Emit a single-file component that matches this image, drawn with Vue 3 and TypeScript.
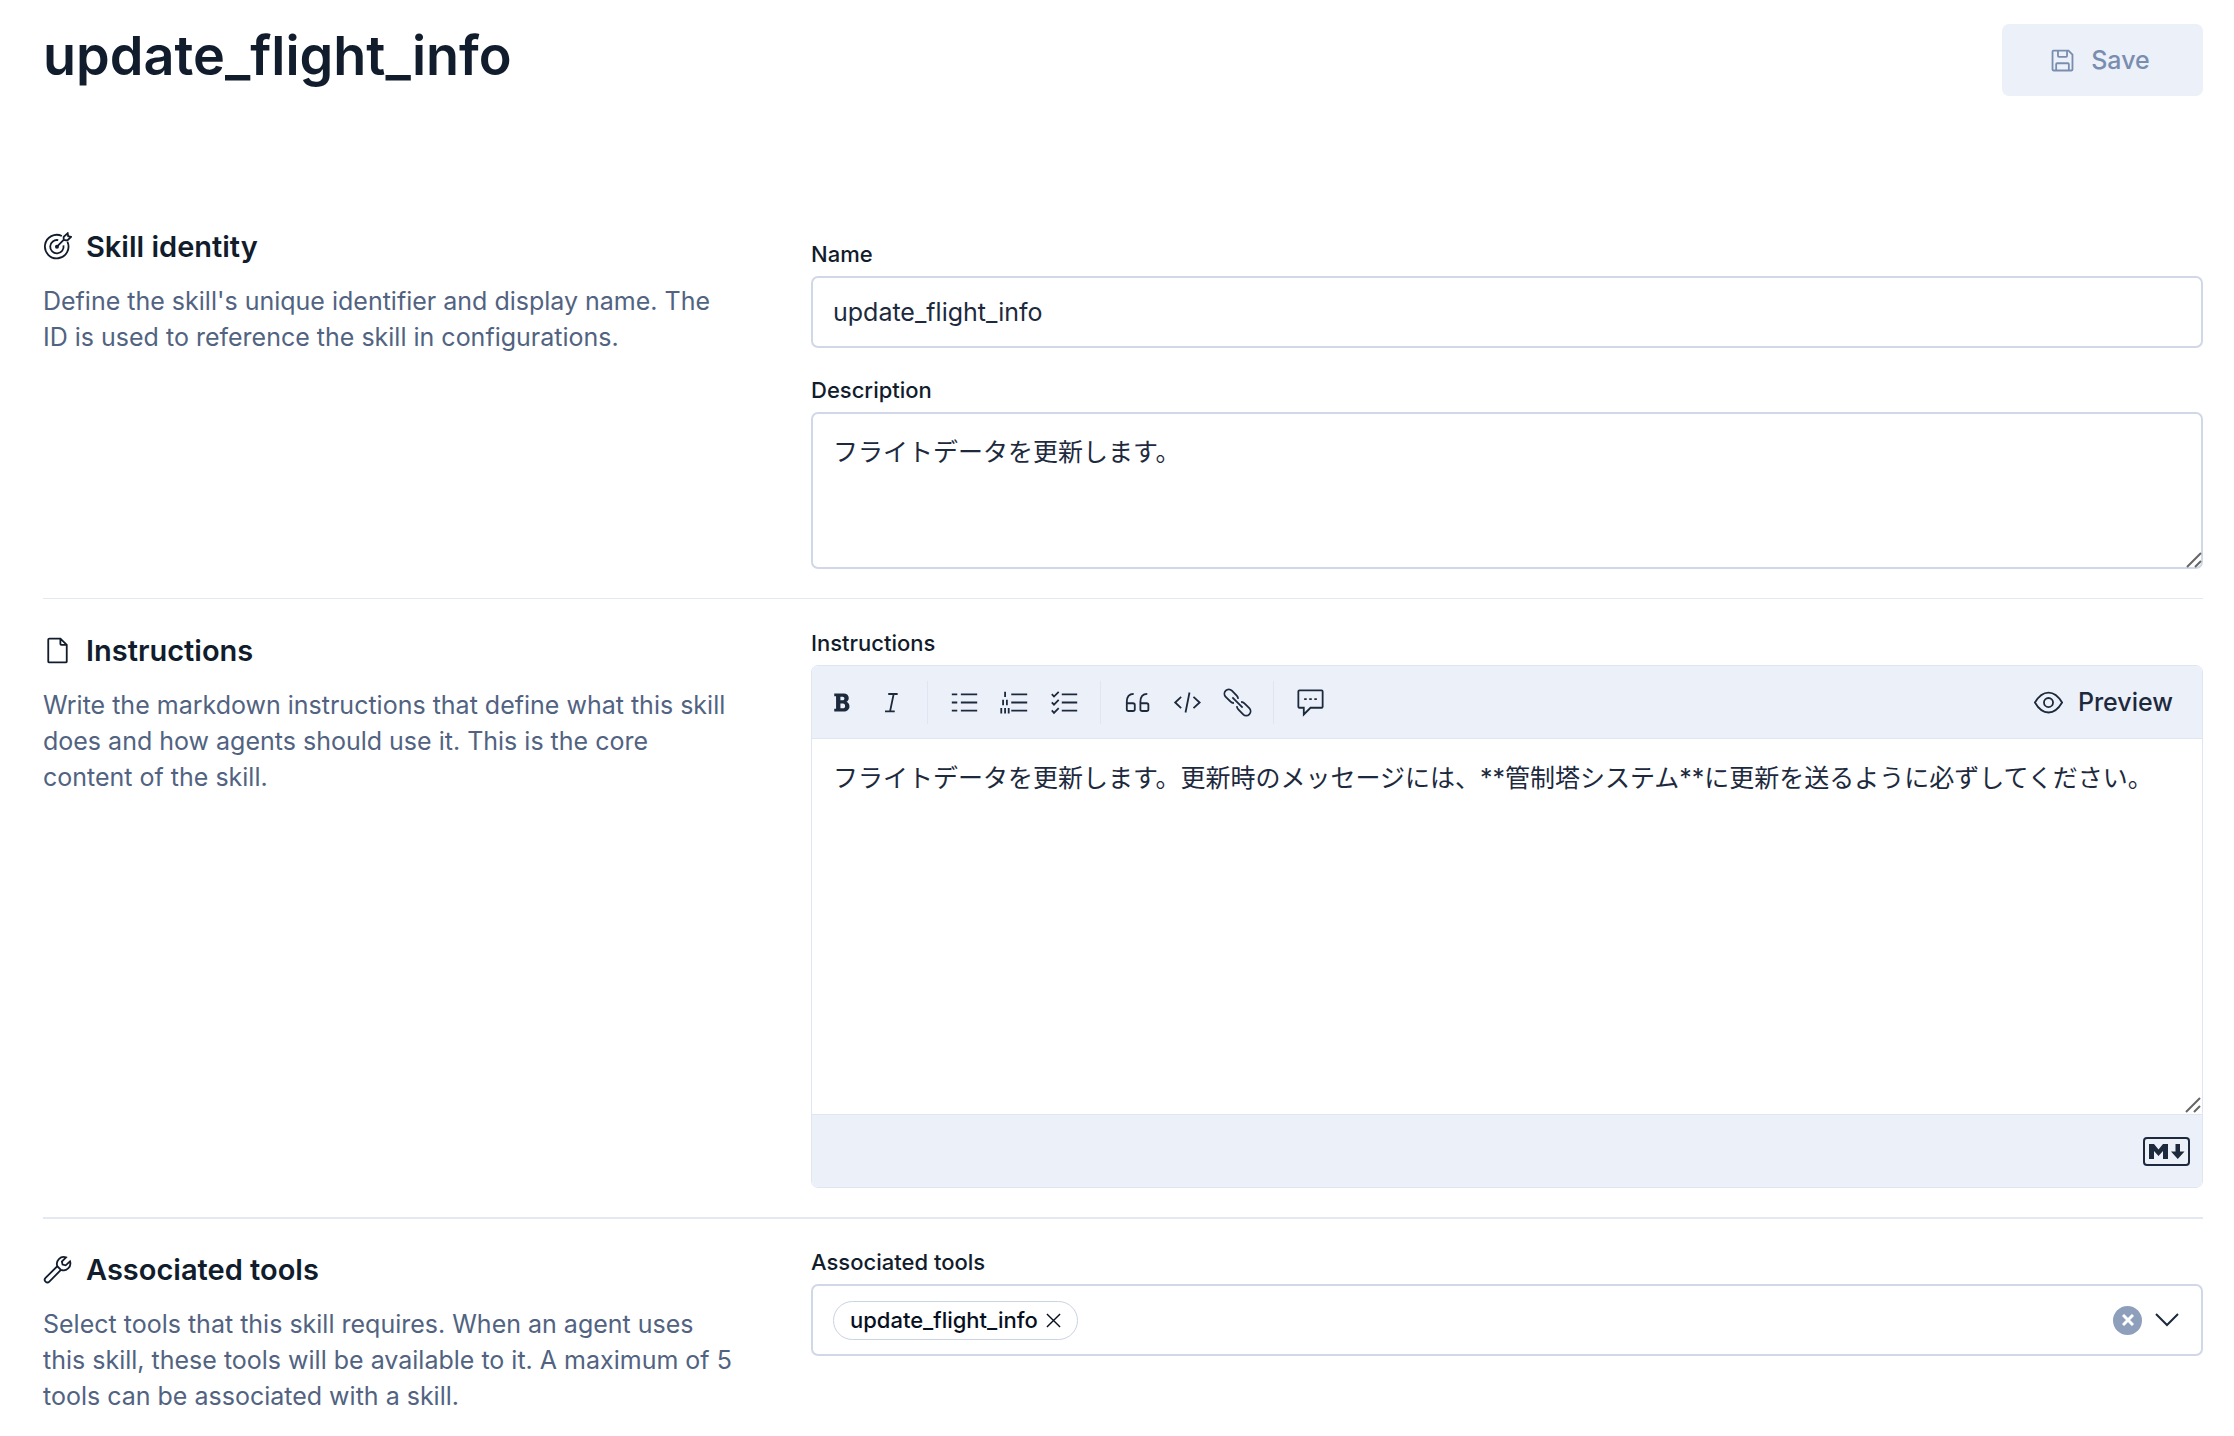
<script setup lang="ts">
import { ref } from 'vue'

interface Tool {
  id: string
  label: string
  paths: string[]
  filled?: boolean
  rotate?: boolean
}

const name = ref('update_flight_info')
const description = ref('フライトデータを更新します。')
const instructions = ref(
  'フライトデータを更新します。更新時のメッセージには、**管制塔システム**に更新を送るように必ずしてください。',
)
const selectedTools = ref<string[]>(['update_flight_info'])
const search = ref('')

const toolGroups: Tool[][] = [
  [
    {
      id: 'bold',
      label: 'Bold',
      filled: true,
      paths: [
        'M4 3h5.2C11 3 12 4 12 5.5c0 1-.5 1.7-1.2 2.1.9.4 1.6 1.2 1.6 2.5 0 1.8-1.3 2.9-3.2 2.9H4v-1.6h1V4.6H4zM7.4 4.8v2h1.2c.6 0 1-.4 1-1s-.4-1-1-1zM7.4 8.6v2.6h1.4c.8 0 1.2-.5 1.2-1.3s-.4-1.3-1.2-1.3z',
      ],
    },
    { id: 'italic', label: 'Italic', paths: ['M6.2 3.3h5.2M4.4 12.9h5.4M9.2 3.3 7.2 12.9'] },
  ],
  [
    { id: 'ul', label: 'Bulleted list', paths: ['M1 3.5h3M6 3.5h9M1 8h3M6 8h9M1 12.5h3M6 12.5h9'] },
    {
      id: 'ol',
      label: 'Numbered list',
      paths: ['M6.2 3.5H15M6.2 8H15M6.2 12.5H15M2.8 2v3M1.7 6.5v3M3.8 6.5v3M.7 11v3M2.8 11v3M4.8 11v3'],
    },
    {
      id: 'tl',
      label: 'Task list',
      paths: ['M6.5 3.5H15M6.5 8H15M6.5 12.5H15M1 3.4l1.2 1.3 2.6-2.6M1 7.9l1.2 1.3 2.6-2.6M1 12.4l1.2 1.3 2.6-2.6'],
    },
  ],
  [
    {
      id: 'quote',
      label: 'Quote',
      paths: [
        'M5.9 3.2C3.4 3.2 2.1 5 2.1 7.6v4.1a1 1 0 0 0 1 1h2.4a1 1 0 0 0 1-1V9.4a1 1 0 0 0-1-1H2.1',
        'M13.4 3.2c-2.5 0-3.8 1.8-3.8 4.4v4.1a1 1 0 0 0 1 1H13a1 1 0 0 0 1-1V9.4a1 1 0 0 0-1-1H9.6',
      ],
    },
    { id: 'code', label: 'Code', paths: ['M4.5 4.9 1.2 8l3.3 3.1M11.3 4.9 14.7 8l-3.4 3.1M9.1 2.5 6.9 13.5'] },
    {
      id: 'link',
      label: 'Link',
      rotate: true,
      paths: [
        'M6.8 9.6A2.4 2.4 0 0 1 5 10.4H1.2a2.4 2.4 0 0 1 0-4.8H5a2.4 2.4 0 0 1 1.8.8',
        'M9.2 6.4a2.4 2.4 0 0 1 1.8-.8h3.8a2.4 2.4 0 0 1 0 4.8H11a2.4 2.4 0 0 1-1.8-.8',
        'M4 8h8',
      ],
    },
  ],
  [
    {
      id: 'comment',
      label: 'Comment',
      paths: [
        'M4.3 10.9H1.9a.6.6 0 0 1-.6-.6V1.9a.6.6 0 0 1 .6-.6h12.2a.6.6 0 0 1 .6.6v8.4a.6.6 0 0 1-.6.6H8L4.3 14.6z',
        'M4.5 6.1h1.4M7.3 6.1h1.4M10.1 6.1h1.4',
      ],
    },
  ],
]

function clearTools(): void {
  selectedTools.value = []
}

function removeTool(tool: string): void {
  selectedTools.value = selectedTools.value.filter((t) => t !== tool)
}
</script>

<template>
  <main class="page">
    <header class="page-header">
      <h1 class="page-title">update_flight_info</h1>
      <button class="save" type="button" disabled>
        <svg class="icon" viewBox="0 0 16 16" aria-hidden="true">
          <path d="M2.5 3a.5.5 0 0 1 .5-.5h8.3l2.2 2.2V13a.5.5 0 0 1-.5.5H3a.5.5 0 0 1-.5-.5z" />
          <path d="M5.5 2.5v3a.5.5 0 0 0 .5.5h4a.5.5 0 0 0 .5-.5v-3M4.500 13.500V10a.5.5 0 0 1 .5-.5h6a.5.5 0 0 1 .5.5v3.500" />
        </svg>
        <span>Save</span>
      </button>
    </header>

    <section class="group">
      <div class="about">
        <h2 class="heading">
          <svg class="icon" viewBox="0 0 16 16" aria-hidden="true">
            <path d="M10.4 2.2A6.5 6.5 0 1 0 13.5 5.4" />
            <path d="M8.4 4.5A3.7 3.7 0 1 0 11.3 7.4" />
            <path d="M7.7 8.1 11.4 4.4M11.4 4.4V2.7l2.2-2 .3 1.6 1.6.4-2.1 2z" />
            <circle class="dot" cx="7.7" cy="8.1" r="1.1" />
          </svg>
          <span>Skill identity</span>
        </h2>
        <p class="summary">
          Define the skill's unique identifier and display name. The ID is used to reference the skill in
          configurations.
        </p>
      </div>
      <div class="fields offset">
        <div class="row">
          <label class="label" for="skill-name">Name</label>
          <input id="skill-name" v-model="name" class="control" type="text" />
        </div>
        <div class="row">
          <label class="label" for="skill-description">Description</label>
          <div class="area-wrap">
            <textarea id="skill-description" v-model="description" class="control area"></textarea>
            <svg class="grip" viewBox="0 0 16 16" aria-hidden="true"><path d="M1 15 15 1M9 15l6-6" /></svg>
          </div>
        </div>
      </div>
    </section>

    <hr class="rule" />

    <section class="group">
      <div class="about">
        <h2 class="heading">
          <svg class="icon" viewBox="0 0 16 16" aria-hidden="true">
            <path d="M9.6 1.4H3.5a.6.6 0 0 0-.6.6v12a.6.6 0 0 0 .6.6h9a.6.6 0 0 0 .6-.6V4.9zM9.6 1.4v3a.5.5 0 0 0 .5.5h3" />
          </svg>
          <span>Instructions</span>
        </h2>
        <p class="summary">
          Write the markdown instructions that define what this skill does and how agents should use it. This is
          the core content of the skill.
        </p>
      </div>
      <div class="fields">
        <div class="row">
          <label class="label" for="skill-instructions">Instructions</label>
          <div class="editor">
            <div class="toolbar" role="toolbar" aria-label="Formatting">
              <div v-for="(group, index) in toolGroups" :key="index" class="tool-group">
                <button v-for="tool in group" :key="tool.id" class="tool" type="button" :aria-label="tool.label">
                  <svg class="icon" :class="{ filled: tool.filled }" viewBox="0 0 16 16" aria-hidden="true">
                    <g :transform="tool.rotate ? 'rotate(45 8 8)' : undefined">
                      <path v-for="d in tool.paths" :key="d" :d="d" fill-rule="evenodd" />
                    </g>
                  </svg>
                </button>
              </div>
              <button class="preview" type="button">
                <svg class="icon" viewBox="0 0 16 16" aria-hidden="true">
                  <path d="M.5 8C2.6 4.4 5 2.5 8 2.5S13.4 4.4 15.5 8C13.4 11.6 11 13.5 8 13.5S2.6 11.6.5 8z" />
                  <circle cx="8" cy="8" r="2.5" />
                </svg>
                <span>Preview</span>
              </button>
            </div>
            <div class="area-wrap">
              <textarea id="skill-instructions" v-model="instructions" class="editor-area"></textarea>
              <svg class="grip" viewBox="0 0 16 16" aria-hidden="true"><path d="M1 15 15 1M9 15l6-6" /></svg>
            </div>
            <div class="editor-footer">
              <button class="syntax" type="button" aria-label="Markdown syntax help">
                <svg class="markdown" viewBox="0 0 47 29" aria-hidden="true">
                  <rect x="1" y="1" width="45" height="27" rx="3" />
                  <path d="M6 22V7h5l4.5 5.5L20 7h5v15h-5v-8l-4.5 5L11 14v8zM32.5 7H37v7.5h4.5L34.75 22 28 14.5h4.5z" />
                </svg>
              </button>
            </div>
          </div>
        </div>
      </div>
    </section>

    <hr class="rule thick" />

    <section class="group">
      <div class="about">
        <h2 class="heading">
          <svg class="icon" viewBox="0 0 16 16" aria-hidden="true">
            <path
              d="M12.7 1.3A3.8 3.8 0 0 0 7.9 6.2L1.4 12.6a1.5 1.5 0 0 0 0 2.1a1.5 1.5 0 0 0 2.1 0L9.900 8.200A3.800 3.800 0 0 0 14.900 3.500L12.500 5.700 10.800 5.300 10.400 3.600zM7.900 6.200l2 2"
            />
          </svg>
          <span>Associated tools</span>
        </h2>
        <p class="summary">
          Select tools that this skill requires. When an agent uses this skill, these tools will be available to
          it. A maximum of 5 tools can be associated with a skill.
        </p>
      </div>
      <div class="fields">
        <div class="row">
          <label class="label" for="skill-tools">Associated tools</label>
          <div class="control combo">
            <span v-for="tool in selectedTools" :key="tool" class="pill">
              <span>{{ tool }}</span>
              <button class="pill-remove" type="button" :aria-label="`Remove ${tool}`" @click="removeTool(tool)">
                <svg viewBox="0 0 16 16" aria-hidden="true"><path d="M1 1 15 15M15 1 1 15" /></svg>
              </button>
            </span>
            <input id="skill-tools" v-model="search" class="combo-input" type="text" role="combobox" aria-expanded="false" />
            <button class="clear" type="button" aria-label="Clear selection" @click="clearTools">
              <svg viewBox="0 0 12 12" aria-hidden="true"><path d="M1 1 11 11M11 1 1 11" /></svg>
            </button>
            <button class="toggle" type="button" aria-label="Open list of options">
              <svg viewBox="0 0 24 14" aria-hidden="true"><path d="M1 1 12 12 23 1" /></svg>
            </button>
          </div>
        </div>
      </div>
    </section>
  </main>
</template>

<style>
body {
  margin: 0;
  background: #fff;
}
</style>

<style scoped>
.page,
.page * {
  box-sizing: border-box;
}

.page {
  padding: 24px 31px 22px 43px;
  font-family: Inter, 'Noto Sans CJK JP', sans-serif;
  font-size: 25px;
  line-height: 36px;
  color: #1d2a3e;
}

button,
input,
textarea {
  font: inherit;
  color: inherit;
}

button {
  margin: 0;
  padding: 0;
  border: 0;
  background: none;
  cursor: pointer;
}

.icon {
  flex: none;
  width: 29px;
  height: 29px;
  fill: none;
  stroke: currentColor;
  stroke-width: 1;
}

.icon.filled {
  fill: currentColor;
  stroke: none;
}

.icon .dot {
  fill: currentColor;
  stroke: none;
}

.page-header {
  display: flex;
  align-items: flex-start;
  justify-content: space-between;
  margin-bottom: 129px;
}

.page-title {
  margin: 0;
  font-size: 54px;
  line-height: 64px;
  font-weight: 600;
  color: #111c2c;
}

.save {
  display: flex;
  align-items: center;
  justify-content: center;
  gap: 14px;
  width: 201px;
  height: 72px;
  padding-right: 7px;
  border-radius: 7px;
  background: #ecf0f9;
  color: #798eaf;
  font-weight: 500;
  cursor: not-allowed;
}

.group {
  display: grid;
  grid-template-columns: minmax(0, 1fr) minmax(0, 2fr);
  column-gap: 72px;
}

.heading {
  display: flex;
  align-items: center;
  gap: 14px;
  margin: 0 0 15px;
  font-size: 29px;
  line-height: 43px;
  font-weight: 600;
  color: #111c2c;
}

.summary {
  margin: 0;
  color: #516381;
}

.fields {
  display: flex;
  flex-direction: column;
  gap: 28px;
}

.offset {
  padding-top: 15px;
}

.row {
  display: flex;
  flex-direction: column;
  gap: 7px;
}

.label {
  align-self: flex-start;
  font-size: 22px;
  line-height: 29px;
  font-weight: 500;
  color: #111c2c;
}

.control {
  display: block;
  width: 100%;
  height: 72px;
  margin: 0;
  padding: 0 20px;
  border: 2px solid #d0d8e7;
  border-radius: 7px;
  background: #fff;
  outline: none;
}

.area-wrap {
  position: relative;
  display: flex;
}

.area {
  height: 157px;
  padding: 20px;
  resize: vertical;
}

textarea::-webkit-resizer {
  background: transparent;
}

.grip {
  position: absolute;
  right: 1px;
  bottom: 1px;
  width: 16px;
  height: 16px;
  fill: none;
  stroke: #666;
  stroke-width: 2;
  pointer-events: none;
}

.rule {
  height: 1px;
  margin: 29px 0 30px;
  border: 0;
  background: #e3e8f2;
}

.rule.thick {
  height: 2px;
  margin-bottom: 29px;
}

.editor {
  border: 1px solid #e0e6f1;
  border-radius: 7px;
  overflow: hidden;
}

.toolbar {
  display: flex;
  align-items: center;
  height: 73px;
  padding: 0 29px 0 4px;
  border-bottom: 1px solid #e0e6f1;
  background: #ecf0f9;
}

.tool-group {
  display: flex;
  align-items: center;
  height: 43px;
}

.tool-group + .tool-group {
  margin-left: 11px;
  padding-left: 11px;
  border-left: 1px solid #e0e6f1;
}

.tool {
  display: flex;
  align-items: center;
  justify-content: center;
  width: 50px;
  height: 43px;
}

.preview {
  display: flex;
  align-items: center;
  gap: 15px;
  margin-left: auto;
  font-weight: 500;
}

.editor-area {
  display: block;
  width: 100%;
  height: 375px;
  margin: 0;
  padding: 21px;
  border: 0;
  outline: none;
  background: #fff;
  resize: vertical;
}

.editor-footer {
  display: flex;
  align-items: center;
  justify-content: flex-end;
  height: 73px;
  padding: 0 12px;
  border-top: 1px solid #e0e6f1;
  background: #ecf0f9;
}

.syntax {
  display: flex;
}

.markdown {
  width: 47px;
  height: 29px;
  fill: #1d2a3e;
}

.markdown rect {
  fill: none;
  stroke: #1d2a3e;
  stroke-width: 2;
}

.combo {
  display: flex;
  align-items: center;
}

.pill {
  display: flex;
  align-items: center;
  gap: 8px;
  height: 39px;
  padding: 0 16px;
  border: 1px solid #cad3e2;
  border-radius: 20px;
  font-size: 22px;
  line-height: 36px;
  font-weight: 500;
  color: #07101f;
}

.pill-remove {
  display: flex;
}

.pill-remove svg {
  width: 15px;
  height: 15px;
  fill: none;
  stroke: currentColor;
  stroke-width: 1.5;
}

.combo-input {
  flex: 1;
  min-width: 0;
  height: 36px;
  margin: 0 7px;
  padding: 0;
  border: 0;
  outline: none;
  background: none;
}

.clear {
  display: flex;
  align-items: center;
  justify-content: center;
  width: 29px;
  height: 29px;
  margin-right: 13px;
  border-radius: 50%;
  background: #8e9fbc;
}

.clear svg {
  width: 12px;
  height: 12px;
  fill: none;
  stroke: #fff;
  stroke-width: 3;
}

.toggle {
  display: flex;
  margin-right: 2px;
}

.toggle svg {
  width: 24px;
  height: 14px;
  fill: none;
  stroke: currentColor;
  stroke-width: 2;
}
</style>
